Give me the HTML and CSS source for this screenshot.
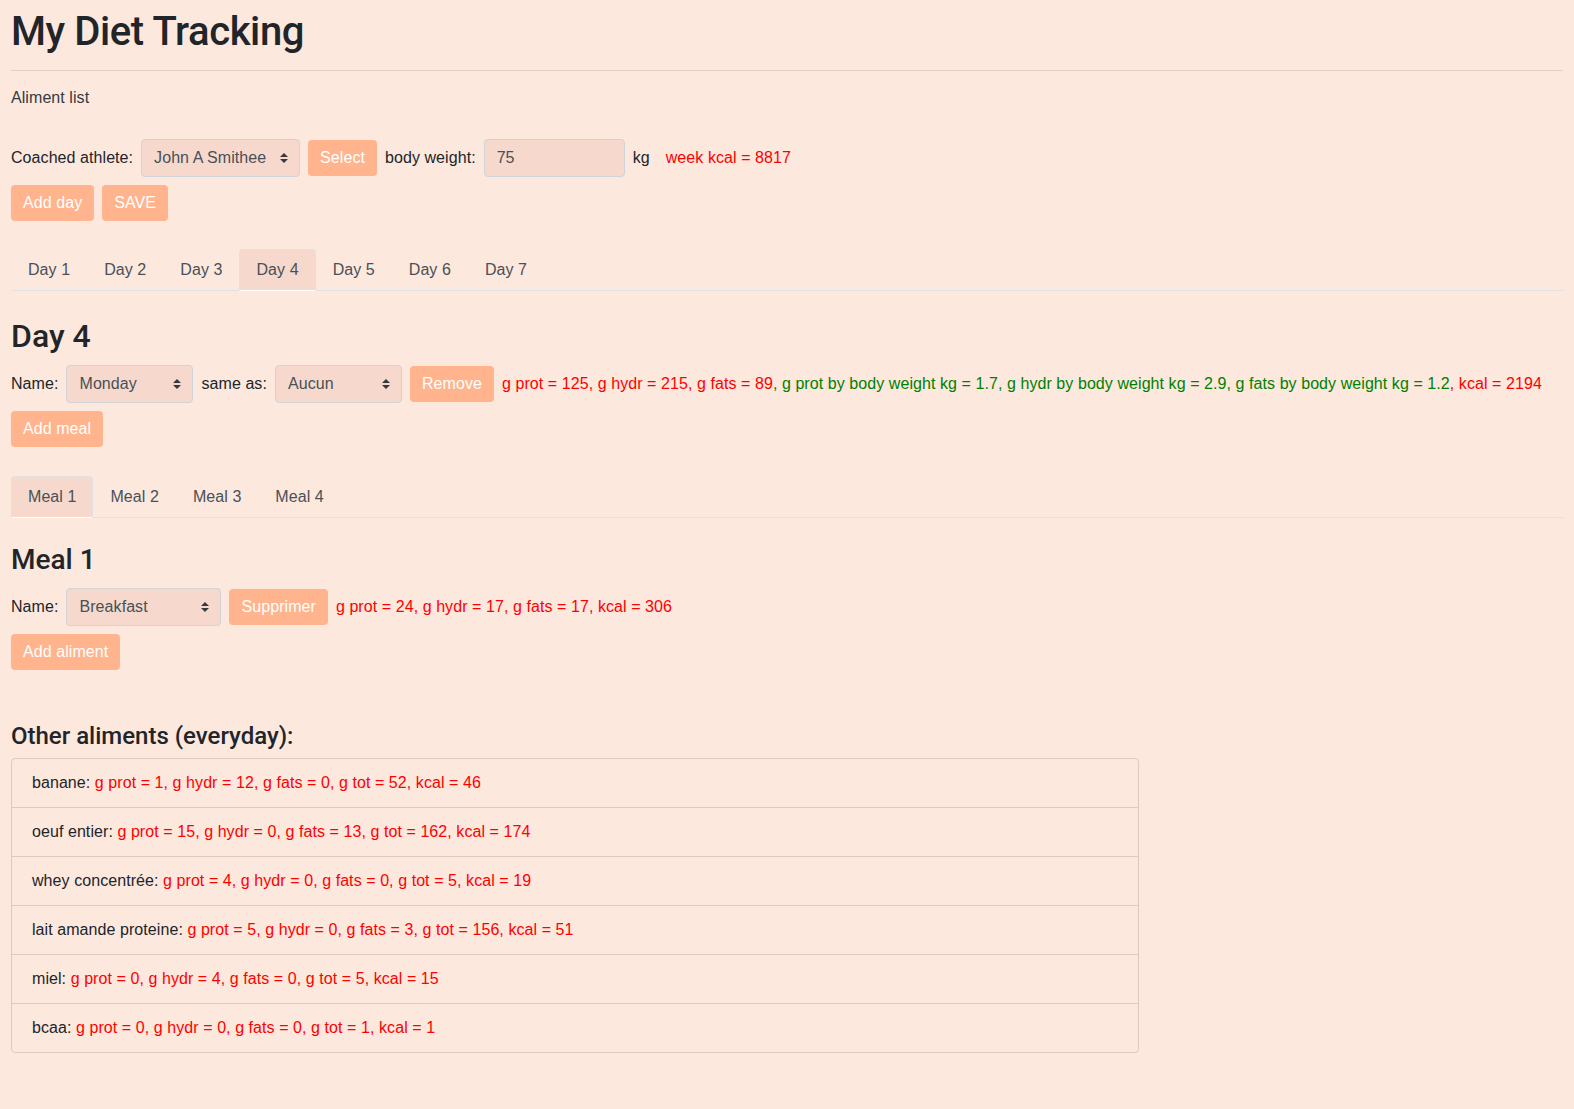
FILE: index.html
```html
<!DOCTYPE html>
<html lang="en">
<head>
<meta charset="utf-8">
<title>My Diet Tracking</title>
<link rel="stylesheet" href="styles.css">
</head>
<body>
<div class="page">
  <h1 class="title">My Diet Tracking</h1>
  <hr class="rule">
  <p class="aliment-link">Aliment list</p>

  <div class="form-row">
    <label class="lbl">Coached athlete:</label>
    <span class="select-wrap w-athlete">
      <select class="sel"><option>John A Smithee</option></select>
      <svg class="arrows" width="8" height="10" viewBox="0 0 4 5"><path d="M2 0L0 2h4zm0 5L0 3h4z"/></svg>
    </span>
    <button class="btn">Select</button>
    <label class="lbl">body weight:</label>
    <input class="num" type="text" value="75">
    <span class="lbl">kg</span>
    <span class="red week">week kcal = 8817</span>
  </div>
  <div class="btn-row first-btns">
    <button class="btn">Add day</button>
    <button class="btn">SAVE</button>
  </div>

  <ul class="tabs">
    <li class="tab">Day 1</li>
    <li class="tab">Day 2</li>
    <li class="tab">Day 3</li>
    <li class="tab active">Day 4</li>
    <li class="tab">Day 5</li>
    <li class="tab">Day 6</li>
    <li class="tab">Day 7</li>
  </ul>

  <h2 class="day-title">Day 4</h2>
  <div class="form-row">
    <label class="lbl">Name:</label>
    <span class="select-wrap w-day">
      <select class="sel"><option>Monday</option></select>
      <svg class="arrows" width="8" height="10" viewBox="0 0 4 5"><path d="M2 0L0 2h4zm0 5L0 3h4z"/></svg>
    </span>
    <label class="lbl">same as:</label>
    <span class="select-wrap w-day">
      <select class="sel"><option>Aucun</option></select>
      <svg class="arrows" width="8" height="10" viewBox="0 0 4 5"><path d="M2 0L0 2h4zm0 5L0 3h4z"/></svg>
    </span>
    <button class="btn">Remove</button>
    <span class="totals"><span class="red">g prot = 125, g hydr = 215, g fats = 89</span><span class="green">, g prot by body weight kg = 1.7, g hydr by body weight kg = 2.9, g fats by body weight kg = 1.2</span><span class="red">, kcal = 2194</span></span>
  </div>
  <div class="btn-row day-btns">
    <button class="btn">Add meal</button>
  </div>

  <ul class="tabs">
    <li class="tab active">Meal 1</li>
    <li class="tab">Meal 2</li>
    <li class="tab">Meal 3</li>
    <li class="tab">Meal 4</li>
  </ul>

  <h3 class="meal-title">Meal 1</h3>
  <div class="form-row">
    <label class="lbl">Name:</label>
    <span class="select-wrap w-meal">
      <select class="sel"><option>Breakfast</option></select>
      <svg class="arrows" width="8" height="10" viewBox="0 0 4 5"><path d="M2 0L0 2h4zm0 5L0 3h4z"/></svg>
    </span>
    <button class="btn">Supprimer</button>
    <span class="red">g prot = 24, g hydr = 17, g fats = 17, kcal = 306</span>
  </div>
  <div class="btn-row meal-btns">
    <button class="btn">Add aliment</button>
  </div>

  <h4 class="other-title">Other aliments (everyday):</h4>
  <ul class="list">
    <li class="item">banane: <span class="red">g prot = 1, g hydr = 12, g fats = 0, g tot = 52, kcal = 46</span></li>
    <li class="item">oeuf entier: <span class="red">g prot = 15, g hydr = 0, g fats = 13, g tot = 162, kcal = 174</span></li>
    <li class="item">whey concentrée: <span class="red">g prot = 4, g hydr = 0, g fats = 0, g tot = 5, kcal = 19</span></li>
    <li class="item">lait amande proteine: <span class="red">g prot = 5, g hydr = 0, g fats = 3, g tot = 156, kcal = 51</span></li>
    <li class="item">miel: <span class="red">g prot = 0, g hydr = 4, g fats = 0, g tot = 5, kcal = 15</span></li>
    <li class="item">bcaa: <span class="red">g prot = 0, g hydr = 0, g fats = 0, g tot = 1, kcal = 1</span></li>
  </ul>
</div>
</body>
</html>
```

FILE: styles.css
```css
html, body {
  margin: 0;
  padding: 0;
  background: #fde8de;
}
body {
  font-family: "Liberation Sans", Arial, sans-serif;
  font-size: 16px;
  line-height: 1.5;
  letter-spacing: 0.07px;
  color: #212529;
}
.page {
  padding: 0 11px 40px;
}
.title, .day-title, .meal-title, .other-title {
  font-family: Roboto, "Liberation Sans", sans-serif;
  font-weight: 500;
  line-height: 1.2;
  color: #212529;
  letter-spacing: 0;
}
.title {
  font-size: 40px;
  margin: 8px 0 0;
  letter-spacing: -0.4px;
}
.rule {
  border: 0;
  border-top: 1px solid rgba(0, 0, 0, 0.1);
  margin: 14px 0 15px;
}
.aliment-link {
  margin: 0 0 29px;
  color: #343a40;
}
.form-row {
  display: flex;
  align-items: center;
  gap: 8px;
  height: 38px;
  white-space: nowrap;
}
.lbl {
  display: inline-block;
}
.select-wrap {
  position: relative;
  display: inline-block;
  height: 38px;
}
.w-athlete { width: 159px; }
.w-day { width: 127px; }
.w-meal { width: 155px; }
.sel {
  -webkit-appearance: none;
  appearance: none;
  width: 100%;
  height: 38px;
  box-sizing: border-box;
  padding: 6px 28px 6px 12px;
  font-family: inherit;
  font-size: 16px;
  line-height: 24px;
  letter-spacing: inherit;
  color: #495057;
  background: #f6d9cc;
  border: 1px solid #ced4da;
  border-radius: 4px;
  margin: 0;
}
.arrows {
  position: absolute;
  right: 12px;
  top: 14px;
  fill: #343a40;
  pointer-events: none;
}
.num {
  width: 141px;
  height: 38px;
  box-sizing: border-box;
  padding: 6px 12px;
  font-family: inherit;
  font-size: 16px;
  color: #495057;
  background: #f6d9cc;
  border: 1px solid #ced4da;
  border-radius: 4px;
  margin: 0;
}
.btn {
  height: 36px;
  box-sizing: border-box;
  padding: 6px 12px;
  font-family: inherit;
  font-size: 16px;
  line-height: 24px;
  letter-spacing: inherit;
  color: #fff;
  background: #ffb48d;
  border: none;
  border-radius: 4px;
  margin: 0;
  cursor: pointer;
}
.week {
  margin-left: 8px;
}
.red { color: #ff0000; }
.green { color: #008000; }
.btn-row {
  display: flex;
  gap: 8px;
  margin-top: 8px;
}
.first-btns { margin-bottom: 28px; }
.day-btns { margin-bottom: 29px; }
.meal-btns { margin-bottom: 52px; }
.tabs {
  list-style: none;
  margin: 0;
  padding: 0;
  display: flex;
  border-bottom: 1px solid #dee2e6;
}
.tab {
  padding: 8px 16px;
  margin-bottom: -1px;
  border: 1px solid transparent;
  border-radius: 4px 4px 0 0;
  color: #495057;
  line-height: 24px;
}
.tab.active {
  background: #f6d9cc;
  border-color: #dee2e6 #dee2e6 #fff;
}
.day-title {
  font-size: 32px;
  margin: 26px 0 10px;
}
.meal-title {
  font-size: 28px;
  margin: 25px 0 11px;
}
.other-title {
  font-size: 24px;
  margin: 0 0 7px;
}
.list {
  list-style: none;
  margin: 0;
  padding: 0;
  width: 1128px;
  box-sizing: border-box;
  border: 1px solid rgba(0, 0, 0, 0.125);
  border-radius: 4px;
}
.item {
  padding: 12px 20px;
  line-height: 24px;
  border-top: 1px solid rgba(0, 0, 0, 0.125);
}
.item:first-child {
  border-top: none;
}
```
